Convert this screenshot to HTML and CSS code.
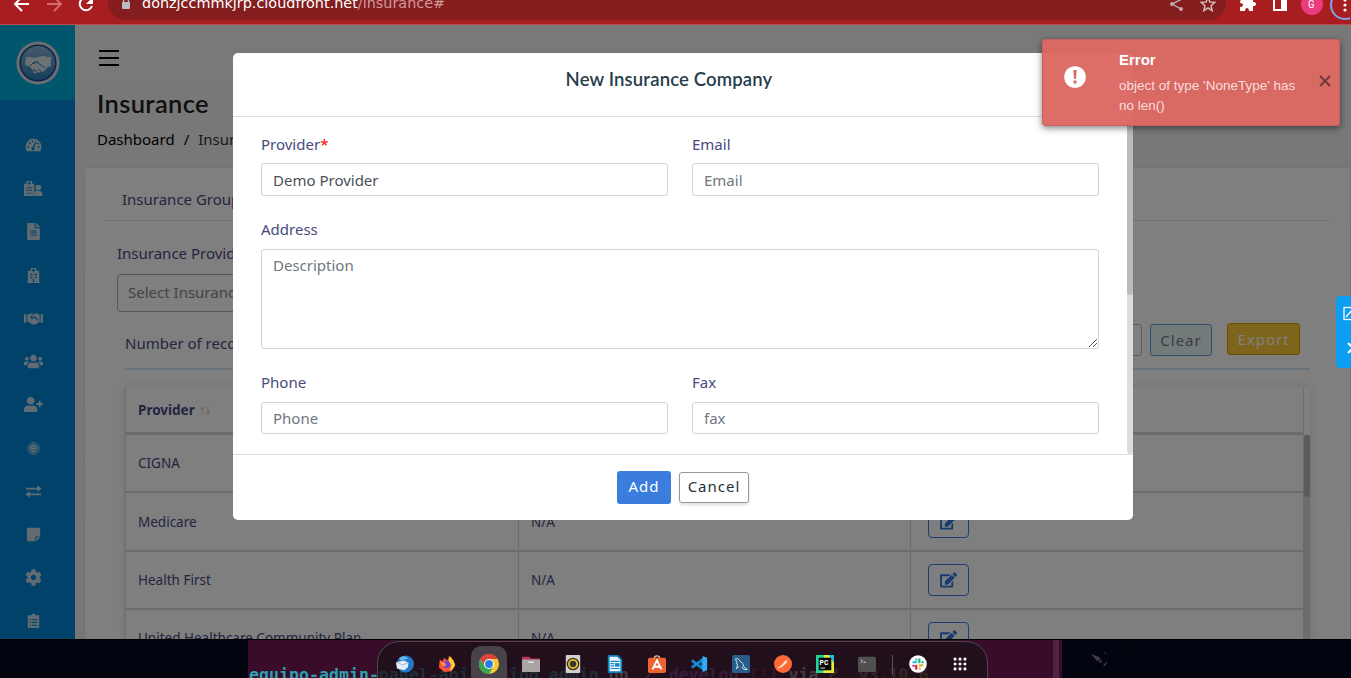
FILE: index.html
```html
<!DOCTYPE html>
<html lang="en">
<head>
<meta charset="utf-8">
<title>Insurance</title>
<link rel="stylesheet" href="styles.css">
</head>
<body>
<svg class="defs" width="0" height="0">
  <symbol id="edit" viewBox="0 0 576 512"><path d="M402.600 83.200l90.200 90.200c3.800 3.800 3.800 10 0 13.800L274.400 405.600l-92.800 10.300c-12.400 1.400-22.900-9.100-21.500-21.500l10.300-92.800L388.800 83.200c3.800-3.800 10-3.800 13.800 0zm162-22.900l-48.800-48.800c-15.200-15.200-39.900-15.200-55.200 0l-35.400 35.400c-3.800 3.800-3.800 10 0 13.800l90.200 90.200c3.800 3.800 10 3.800 13.800 0l35.400-35.400c15.200-15.300 15.200-40 0-55.200zM384 346.200V448H64V128h229.800c3.200 0 6.200-1.300 8.500-3.500l40-40c7.600-7.600 2.200-20.500-8.500-20.500H48C21.500 64 0 85.500 0 112v352c0 26.500 21.500 48 48 48h352c26.500 0 48-21.500 48-48V306.200c0-10.700-12.900-16-20.500-8.500l-40 40c-2.200 2.300-3.500 5.300-3.500 8.500z"/></symbol>
</svg>

<header class="browser">
  <svg class="nav-icons" width="100" height="24" fill="none" stroke="#fff" stroke-width="2"><path d="M29 4H16M22-3l-7 7 7 7"/><path stroke="#d56a6a" d="M47 4h13M54-3l7 7-7 7"/><path d="M91 0a6.300 6.300 0 1 0 1 6"/><path fill="#fff" stroke="none" d="M93-3v7h-7z"/></svg>
  <div class="address">
    <svg width="10" height="12" viewBox="0 0 10 12"><path d="M2.500 5V3a2.500 2.500 0 0 1 5 0v2" fill="none" stroke="#b9bcc0" stroke-width="1.400"/><rect x="1" y="4" width="8" height="7" rx="1" fill="#b9bcc0"/></svg>
    <span class="url">donzjccmmkjrp.cloudfront.net<i>/insurance#</i></span>
    <svg class="share" width="60" height="24" fill="none" stroke="#c3a9a9"><path d="M12-1L2 4l9 5" stroke-width="1.400"/><circle cx="2" cy="4" r="2" fill="#c3a9a9" stroke="none"/><circle cx="11" cy="9" r="2" fill="#c3a9a9" stroke="none"/><path stroke="#d2b8b8" stroke-width="1.500" d="M38-3l1.800 5 5 .3-3.800 3.400 1.200 5L38 8l-4.200 2.700 1.200-5L31.200 2.300l5-.3z"/></svg>
  </div>
  <svg class="actions" width="110" height="24"><path fill="#fff" d="M1-2h4c-1-4 5-4 4 0h4v4c4-1 4 5 0 4v5H9c0-4-4-4-4 0H0V7c4 0 4-4 0-4z"/><rect x="34" y="-4" width="12" height="14" fill="none" stroke="#fff" stroke-width="2"/><path fill="#fff" d="M41-4h6v14h-6z"/><circle cx="72" cy="4" r="11" fill="#eb3b7c"/><text x="68" y="8" font-size="11" fill="#fff">G</text><circle cx="105" cy="5" r="14" fill="none" stroke="#7da5e8" stroke-width="2"/><g fill="#fff"><circle cx="105" cy="0" r="1.600"/><circle cx="105" cy="5" r="1.600"/><circle cx="105" cy="10" r="1.600"/></g></svg>
</header>

<div class="app">
  <aside class="sidebar">
    <div class="brand">
      <svg width="44" height="44" viewBox="0 0 44 44"><defs><linearGradient id="lg" x2="0" y2="1"><stop stop-color="#8cb5d8"/><stop offset="1" stop-color="#287eb8"/></linearGradient></defs><circle cx="22" cy="22" r="21.500" fill="#d9dce2"/><circle cx="22" cy="22" r="17.800" fill="url(#lg)" stroke="#1d4b91" stroke-width="1.600"/><path fill="#d9e2e8" d="M10 16h4l5 1 3-1 5-1 5 1h3v9l-3 1-3 3-2 2-2-1-2 2-3-2-3-1-4-4-4-1zM16 30l5 1-2 2z"/><path d="M14 25l4-4 4 1 7 5M22 20l-5 3M22 28l3 2M18 28l2 2" fill="none" stroke="#397eb0"/></svg>
    </div>
    <nav class="menu">
      <svg viewBox="0 0 20 20"><path d="M10 3a8.500 8.500 0 0 0-7 13h14A8.500 8.500 0 0 0 10 3z"/><g fill="#0084d2"><circle cx="4.500" cy="11.500" r="1"/><circle cx="6" cy="7.500" r="1"/><circle cx="9" cy="5.500" r="1"/><circle cx="15.500" cy="11.500" r="1"/><circle cx="14.500" cy="8" r="1"/><circle cx="9.500" cy="13.500" r="1.700"/></g><path d="M9.500 13l3-7" stroke="#0084d2" stroke-width="1.400"/></svg>
      <svg viewBox="0 0 20 20"><path d="M0 5h2.500V2h6v3H11v6l-1 7H0z"/><circle cx="15" cy="9" r="3"/><path d="M10.500 18c0-6 2-5.500 4.500-5.500s5 0 4.500 5.500z"/><path d="M5.500 3v3M4 4.500h3M3 9h2m1 0h2M3 12h2m1 0h2M3 15h2m1 0h2" stroke="#0084d2" stroke-width="1.300"/></svg>
      <svg viewBox="-96 -24 576 560"><path d="M224 136V0H24C10.700 0 0 10.700 0 24v464c0 13.300 10.700 24 24 24h336c13.300 0 24-10.700 24-24V160H248c-13.200 0-24-10.800-24-24zm64 248H96v-32h192zm0-64H96v-32h192zm0-64H96v-32h192zm96-134v6H256V0h6c6 0 12 3 17 7l98 98c5 5 7 11 7 17z"/></svg>
      <svg viewBox="0 0 20 20"><path d="M4 5h3V2h6v3h3v12h1v1H3v-1h1z"/><path d="M10 3v3M8.500 4.500h3M6.500 9H9m2 0h2.500M6.500 12H9m2 0h2.500M10 14v3" stroke="#0084d2" stroke-width="1.500"/></svg>
      <svg viewBox="0 0 20 20"><path d="M0 5.500h2.500v9H0zM17.500 5.500H20v9h-2.500zM3.500 6l4-1.500 2.500 1 3-1L16.500 6v7.500l-3 2-3 1-3-1-4-2.500z"/><path d="M9 6L7 9l2 1 2-2 4 4" fill="none" stroke="#0084d2" stroke-width="1.100"/></svg>
      <svg viewBox="0 -64 640 640"><path d="M96 224c35.300 0 64-28.700 64-64s-28.700-64-64-64-64 28.700-64 64 28.700 64 64 64zm448 0c35.300 0 64-28.700 64-64s-28.700-64-64-64-64 28.700-64 64 28.700 64 64 64zm32 32h-64c-17.600 0-33.500 7.100-45.100 18.600 40.300 22.100 68.900 62 75.100 109.400h66c17.700 0 32-14.300 32-32v-32c0-35.300-28.700-64-64-64zm-256 0c61.900 0 112-50.100 112-112S381.900 32 320 32 208 82.100 208 144s50.100 112 112 112zm76.800 32h-8.300c-20.800 10-43.900 16-68.500 16s-47.600-6-68.500-16h-8.300C179.600 288 128 339.600 128 403.200V432c0 26.500 21.500 48 48 48h288c26.500 0 48-21.500 48-48v-28.800c0-63.600-51.600-115.200-115.200-115.200zm-223.700-13.400C161.500 263.100 145.600 256 128 256H64c-35.300 0-64 28.700-64 64v32c0 17.700 14.300 32 32 32h65.900c6.300-47.400 34.900-87.300 75.200-109.400z"/></svg>
      <svg viewBox="0 -64 640 640"><path d="M624 208h-64v-64c0-8.800-7.200-16-16-16h-32c-8.800 0-16 7.200-16 16v64h-64c-8.800 0-16 7.200-16 16v32c0 8.800 7.200 16 16 16h64v64c0 8.800 7.200 16 16 16h32c8.800 0 16-7.200 16-16v-64h64c8.800 0 16-7.200 16-16v-32c0-8.800-7.200-16-16-16zm-400 48c70.700 0 128-57.300 128-128S294.700 0 224 0 96 57.300 96 128s57.300 128 128 128zm89.600 32h-16.700c-22.200 10.200-46.900 16-72.900 16s-50.600-5.800-72.900-16h-16.700C60.200 288 0 348.200 0 422.400V464c0 26.500 21.500 48 48 48h352c26.500 0 48-21.500 48-48v-41.600c0-74.200-60.200-134.400-134.400-134.400z"/></svg>
      <svg viewBox="0 0 20 20"><circle cx="10" cy="11" r="6" fill="none" stroke="#c1d9e5" stroke-width="1"/><circle cx="10" cy="11" r="4.400"/><path d="M6 12q4 2 8 0M8 9l3 1 2-1" fill="none" stroke="#0084d2" stroke-width=".8"/></svg>
      <svg viewBox="0 0 20 20"><path d="M2 6h12V3.500L18.500 7 14 10.500V8H2zM18 12H6V9.500L1.500 13 6 16.500V14h12z"/></svg>
      <svg viewBox="0 0 20 20"><path d="M3 4q0-1 1-1h12q1 0 1 1v8h-5v5H4q-1 0-1-1zM13 13h4l-4 4z"/></svg>
      <svg viewBox="-32 -32 576 576"><path d="M487.400 315.700l-42.600-24.600c4.300-23.200 4.300-47 0-70.200l42.600-24.600c4.900-2.800 7.100-8.600 5.500-14-11.100-35.600-30-67.800-54.700-94.600-3.800-4.100-10-5.100-14.800-2.300L380.800 110c-17.900-15.400-38.500-27.300-60.800-35.100V25.800c0-5.600-3.900-10.500-9.400-11.700-36.700-8.200-74.300-7.800-109.200 0-5.500 1.200-9.400 6.100-9.400 11.700V75c-22.200 7.900-42.800 19.800-60.800 35.100L88.700 85.500c-4.900-2.800-11-1.900-14.800 2.300-24.700 26.700-43.600 58.900-54.700 94.600-1.700 5.400.6 11.200 5.500 14L67.300 221c-4.300 23.200-4.300 47 0 70.200l-42.600 24.600c-4.900 2.800-7.100 8.600-5.500 14 11.100 35.600 30 67.800 54.700 94.600 3.800 4.100 10 5.100 14.800 2.300l42.600-24.600c17.900 15.400 38.500 27.300 60.800 35.100v49.200c0 5.600 3.900 10.500 9.400 11.700 36.700 8.200 74.300 7.800 109.200 0 5.500-1.200 9.400-6.100 9.400-11.700v-49.200c22.200-7.900 42.800-19.800 60.800-35.100l42.600 24.600c4.900 2.800 11 1.900 14.800-2.300 24.700-26.700 43.600-58.900 54.700-94.600 1.500-5.500-.7-11.300-5.600-14.100zM256 336c-44.100 0-80-35.900-80-80s35.900-80 80-80 80 35.900 80 80-35.900 80-80 80z"/></svg>
      <svg viewBox="0 0 20 20"><path d="M4 4.500h4a2 2 0 0 1 4 0h4V18H4z"/><path d="M8.500 9H14M8.500 12H14M8.500 15H14M6 9h1.300M6 12h1.300M6 15h1.300" stroke="#0084d2" stroke-width="1.200"/></svg>
    </nav>
  </aside>

  <main class="main">
    <div class="page-head">
      <div class="burger"><b></b><b></b><b></b></div>
      <h1><span>Insurance</span></h1>
      <div class="crumbs"><span class="link">Dashboard</span><span class="slash">/</span><span>Insurance</span></div>
    </div>
    <section class="card">
      <div class="tabs"><span>Insurance Group</span></div>
      <div class="filter">
        <label>Insurance Provider</label>
        <div class="select">Select Insurance</div>
      </div>
      <div class="records">
        <span class="count">Number of records</span>
        <div class="search"></div>
        <div class="clear">Clear</div>
        <div class="export">Export</div>
      </div>
      <div class="table">
        <div class="row head"><div>Provider <small>↑↓</small></div><div></div><div></div></div>
        <div class="scroll-area">
          <div class="rows">
            <div class="row"><div>CIGNA</div><div>N/A</div><div></div></div>
            <div class="row"><div>Medicare</div><div>N/A</div><div><span class="edit"><svg><use href="#edit"/></svg></span></div></div>
            <div class="row"><div>Health First</div><div>N/A</div><div><span class="edit"><svg><use href="#edit"/></svg></span></div></div>
            <div class="row"><div>United Healthcare Community Plan</div><div>N/A</div><div><span class="edit"><svg><use href="#edit"/></svg></span></div></div>
          </div>
          <div class="track"><div class="thumb"></div></div>
        </div>
      </div>
    </section>
  </main>

  <div class="backdrop"></div>
  <div class="widget"><svg width="15" height="72" fill="none" stroke="#fff" stroke-width="1.300"><rect x="8" y="11.500" width="12" height="12"/><path d="M10 21l6-7"/><path stroke-width="2" d="M12 47l5 5-5 5"/></svg></div>

  <div class="modal">
    <div class="modal-head"><h2>New Insurance Company</h2></div>
    <div class="modal-body">
      <div class="form">
        <div class="field"><label>Provider<em>*</em></label><div class="input value">Demo Provider</div></div>
        <div class="field"><label>Email</label><div class="input">Email</div></div>
        <div class="field wide"><label>Address</label><div class="input area">Description<svg width="10" height="10" stroke="#555"><path d="M1 9l8-8M5 9l4-4"/></svg></div></div>
        <div class="field low"><label>Phone</label><div class="input">Phone</div></div>
        <div class="field low"><label>Fax</label><div class="input">fax</div></div>
      </div>
      <div class="modal-track"><div class="modal-thumb"></div></div>
    </div>
    <div class="modal-foot"><div class="btn add">Add</div><div class="btn cancel">Cancel</div></div>
  </div>

  <div class="toast">
    <svg class="warn" width="22" height="22"><circle cx="11" cy="11" r="10.800" fill="#fff"/><path d="M9.300 4h3.400l-.7 9h-2z" fill="#d96c66"/><circle cx="11" cy="16" r="1.700" fill="#d96c66"/></svg>
    <div class="toast-text"><strong>Error</strong><p>object of type 'NoneType' has<br>no len()</p></div>
    <svg class="close" width="12" height="12" stroke="#713a38" stroke-width="2"><path d="M1 1l10 10M11 1L1 11"/></svg>
  </div>
</div>

<div class="desktop">
  <div class="terminal"><pre><b class="cyan">equipo-admin-panel-api/equipo_admin</b> on <b class="violet">⎇ develop</b> <b class="red">[!]</b> via <b class="gold">Ƨ  v3.10.6</b></pre><i class="term-scroll"></i></div>
  <svg class="wallpaper" width="289" height="38"><path fill="#493554" d="M29 14l8 3 2 3-4 1zM36 22l4-2-1 3zM42 13l2-1v2zM41 25l5-4-3 5z"/><path fill="#04060d" d="M50 14l18-10 8-3-14 13z"/></svg>
  <div class="dock">
    <svg viewBox="0 0 20 20"><circle cx="10.500" cy="10" r="9.500" fill="#2477c9"/><path fill="#68b5ee" d="M3 4q5-5 11 0l-8 2z"/><path fill="#e4edf8" d="M0 8l9-2 5 3-1 5-4 3-8-2z"/><path d="M1 8l6 3 6-2" stroke="#98b4d4" fill="none"/></svg>
    <svg viewBox="0 0 20 20"><path fill="#ff513d" d="M2 5l3 2 2-4 3 3 4-5 5 10-4 7-8 1-6-5z"/><path fill="#ffcf38" d="M12 1q6 4 7 10-2 6-6 6l2-6-3-4z"/><circle cx="9.500" cy="10.500" r="4" fill="#7643d5"/><path fill="#ff9a28" d="M2 8l5 0 2 3-3 2z"/></svg>
    <div class="active"><svg viewBox="0 0 20 20"><circle cx="10" cy="10" r="10" fill="#f8ca2f"/><path fill="#dc4439" d="M1.300 5A10 10 0 0 1 18.700 5H10L5.700 12.500z"/><path fill="#35a853" d="M1.300 5L5.700 12.500 14.300 12.500 10 20A10 10 0 0 1 1.300 5z"/><circle cx="10" cy="10" r="5" fill="#fff"/><circle cx="10" cy="10" r="3.900" fill="#297be6"/></svg></div>
    <svg viewBox="0 0 20 20"><path fill="#b8345a" d="M0 2h8l2 2h10v6H0z"/><rect x="0" y="5" width="20" height="14" rx="1" fill="#aaa4a4"/><path stroke="#eee" stroke-width="1.500" d="M7 8h6"/></svg>
    <svg viewBox="0 0 20 20"><rect x="2" y="0" width="16" height="20" rx="1" fill="#d6d1c7"/><circle cx="10" cy="10" r="7" fill="#353535"/><circle cx="10" cy="10" r="4.500" fill="none" stroke="#e7bf20" stroke-width="2"/></svg>
    <svg viewBox="0 0 20 20"><path fill="#eaf5fb" stroke="#087cbd" stroke-width="2" d="M3 1h10l4 4v14H3z"/><path stroke="#138ac5" stroke-width="1.300" d="M5 7h10M5 9.500h4M5 12h4M5 15h10"/><path fill="#138ac5" d="M10 9h5v4h-5z"/></svg>
    <svg viewBox="0 0 20 20"><path d="M7 4q0-3 3-3t3 3" fill="none" stroke="#d9c09c" stroke-width="1.500"/><rect x="0" y="3" width="20" height="17" rx="2" fill="#ef632e"/><path d="M5 16l5-10 5 10M6 13h8" fill="none" stroke="#fff" stroke-width="2.200"/></svg>
    <svg viewBox="0 0 20 20"><path d="M2 6l12 9V5L2 14" fill="none" stroke="#1689d2" stroke-width="3"/><path fill="#36a9f2" d="M14 1l5 2v14l-5 2z"/></svg>
    <svg viewBox="0 0 20 20"><rect width="20" height="20" rx="2" fill="#285d89"/><path d="M4 5q2-3 5 2 4 2 4 6l4 3-4 0-2-3M4 4q1 4 2 7l-1 4 3-2" fill="none" stroke="#d5e4ec" stroke-width="1.100"/></svg>
    <svg viewBox="0 0 20 20"><circle cx="10" cy="10" r="10" fill="#ff6938"/><path d="M6 14l6-7 3-2-1 4-6 5z" fill="#ffe3d7"/><path d="M4 15l4-3" stroke="#fff"/></svg>
    <svg viewBox="0 0 20 20"><path fill="#22d39a" d="M0 0h20v20H0z"/><path fill="#e8ee36" d="M9 0h7l4 8v12H8z"/><path fill="#20bde0" d="M14 0h6v9z"/><path fill="#050505" d="M3 3h14v14H3z"/><text x="4" y="11" font-size="8.500" font-weight="700" fill="#fff">PC</text><path stroke="#fff" d="M5 14.500h5"/></svg>
    <svg viewBox="0 0 20 20"><rect x="0" y="2" width="20" height="17" rx="2" fill="#505050"/><path d="M3 5l2 2-2 2M6 8h3" fill="none" stroke="#ddd"/></svg>
    <i class="divider"></i>
    <svg viewBox="0 0 20 20"><circle cx="10" cy="10" r="9.800" fill="#fff"/><g stroke-width="2.600" stroke-linecap="round"><path stroke="#36c5f0" d="M5 8h3M8 5v0"/><path stroke="#2eb67d" d="M11.500 5v3M15 8v0"/><path stroke="#ecb22e" d="M12 11.500h3M12 15v0"/><path stroke="#e01e5a" d="M8 12v3M5 12v0"/></g></svg>
    <svg viewBox="0 0 20 20"><g fill="#fff"><path d="M3 3h3v3H3zM8.500 3h3v3h-3zM14 3h3v3h-3zM3 8.500h3v3H3zM8.500 8.500h3v3h-3zM14 8.500h3v3h-3zM3 14h3v3H3zM8.500 14h3v3h-3zM14 14h3v3h-3z"/></g></svg>
  </div>
</div>
</body>
</html>
```

FILE: styles.css
```css
* { box-sizing: border-box; }
body { margin: 0; width: 1351px; height: 678px; overflow: hidden; font-family: "Noto Sans", sans-serif; font-stretch: 87.5%; font-size: 15px; letter-spacing: 0; color: #474a80; background: #020510; }
h1, h2, p, pre { margin: 0; }
.defs { position: absolute; }
svg { flex: none; display: block; }

.browser { height: 25px; background: #a81d1f; border-bottom: 1px solid #bd4a4b; display: flex; font-family: Roboto, sans-serif; overflow: hidden; }
.nav-icons { width: 100px; margin-right: 8px; }
.address { width: 1118px; height: 20px; background: #841d1e; border-radius: 0 0 18px 18px; display: flex; padding-left: 13px; }
.address > svg:first-child { margin-top: -2px; }
.url { font: 14.400px/20px "DejaVu Sans", sans-serif; letter-spacing: 0; color: #fff; margin: -7px 0 0 11px; }
.url i { font-style: normal; color: #cf9b9c; }
.share { margin-left: auto; margin-right: -4px; }
.actions { margin-left: 14px; }

.app { position: relative; height: 614px; display: flex; overflow: hidden; }
.sidebar { width: 75px; flex: none; background: #0084d2; }
.brand { height: 75px; background: #00add9; display: flex; align-items: center; justify-content: center; }
.menu { display: grid; grid-auto-rows: 43.200px; padding-top: 24px; padding-left: 24px; align-items: center; }
.menu svg { width: 19px; height: 19px; fill: #c1d9e5; }

.main { flex: 1; min-width: 0; background: linear-gradient(#f2f2f2, #ededed); padding: 24px 1px 0 10px; }
.page-head { padding-left: 13px; height: 119px; }
.burger { display: grid; gap: 5px; width: 20px; padding-top: 1px; margin-left: 1px; }
.burger b { height: 2px; background: #000; }
h1 { font: 600 25.500px/30px Lato, sans-serif; letter-spacing: .35px; color: #202020; margin-top: 22px; margin-left: -1px; }
.crumbs { color: #333; margin-top: 11px; line-height: 20px; display: flex; gap: 9px; margin-left: -1px; }
.crumbs .link, .crumbs .slash { color: #000; }
.card { background: #fff; height: 600px; border-radius: 4px 4px 0 0; padding: 0 20px; box-shadow: 0 0 3px #d8d8d8; }
.tabs { height: 53px; border-bottom: 1px solid #dedede; padding: 21px 17px 0; line-height: 20px; }
.filter { padding: 22px 12px 0; }
.filter label { display: block; line-height: 20px; }
.select { height: 38px; width: 300px; border: 1px solid #aaa; border-radius: 4px; color: #888; padding: 7px 10px; line-height: 20px; margin-top: 11px; }
.records { margin: 10px 20px 0; height: 48px; border-bottom: 2px solid #d6e7f5; display: flex; align-items: flex-start; }
.count { line-height: 20px; margin-top: 11px; }
.search { width: 100px; height: 32px; border: 1px solid #bbb; border-radius: 3px; margin: 2px 8px 0 auto; }
.clear, .export { height: 32px; border-radius: 3px; letter-spacing: 1px; text-align: center; line-height: 30px; border: 1px solid; }
.clear { width: 62px; background: #e7f6f4; border-color: #5d97df; margin-top: 2px; color: #757985; }
.export { width: 73px; color: #fff; background: #ffcb36; border-color: #d79f00; margin: 1px 10px 0 15px; }
.table { margin: 17px 20px 0; box-shadow: 0 0 8px #ddd; font-size: 13.500px; }
.row { display: grid; grid-template-columns: 393px 392px 393px; height: 58.400px; border-bottom: 2px solid #d9d9d9; border-left: 1px solid #d9d9d9; }
.row > div { border-right: 1px solid #d9d9d9; padding: 0 12px; display: flex; align-items: center; }
.row > div:nth-child(3) { padding-left: 17px; }
.head { height: 48px; width: 1179px; border-bottom-width: 3px; font-weight: 700; }
.head small { font-weight: 400; color: #aaa; margin-left: 4px; font-size: 12px; }
.scroll-area { display: flex; }
.track { width: 6px; background: #d9d9d9; }
.thumb { height: 62px; background: #b6b6b6; border-radius: 3px; }
.edit { width: 41px; height: 32px; border: 1px solid #3a7edf; border-radius: 4px; display: grid; place-items: center; }
.edit svg { width: 17px; height: 16px; fill: #2e77dc; }

.backdrop { position: absolute; inset: 0; background: rgba(0,0,0,.5); }
.widget { position: absolute; right: 0; top: 271px; width: 15px; height: 72px; background: #0c9ef0; border-radius: 4px 0 0 4px; }

.modal { position: absolute; left: 233px; top: 28px; width: 900px; height: 467px; background: #fff; border-radius: 5px; display: flex; flex-direction: column; overflow: hidden; }
.modal-head { height: 64px; border-bottom: 1px solid #dcdee5; padding: 14px 0 0 0; text-align: center; }
h2 { font: 600 18.500px/25px Lato, sans-serif; letter-spacing: .15px; color: #263e4b; padding-right: 28px; }
.modal-body { height: 337px; display: flex; }
.form { width: 894px; padding: 17px 28px 0; display: grid; grid-template-columns: 407px 407px; column-gap: 24px; align-content: start; }
.field { height: 85px; }
.field.wide { grid-column: span 2; height: 153px; }
.field label { display: block; line-height: 20px; }
.field em { color: red; font-style: normal; }
.input { border: 1px solid #ced1da; border-radius: 3px; height: 33px; margin-top: 9px; padding: 0 11px; line-height: 32px; color: #707780; }
.wide .input { margin-top: 10px; }
.low .input { height: 32px; margin-top: 10px; line-height: 30px; }
.value { color: #4b5057; }
.input.area { height: 100px; display: flex; justify-content: space-between; padding: 0 0 0 11px; line-height: 30px; }
.area svg { align-self: flex-end; }
.modal-track { width: 6px; background: #dcdcdc; border-radius: 0 0 3px 3px; }
.modal-thumb { height: 178px; background: #bbb; border-radius: 0 0 3px 3px; }
.modal-foot { flex: 1; border-top: 1px solid #dcdee5; display: flex; justify-content: center; align-items: center; gap: 8px; }
.btn { border-radius: 3px; letter-spacing: 1px; text-align: center; }
.add { width: 54px; height: 33px; line-height: 31px; color: #fff; background: #3b7ddd; }
.cancel { width: 70px; height: 31px; border: 1px solid #9298a0; line-height: 27px; color: #26323a; box-shadow: 0 2px 3px #ddd; }

.toast { position: absolute; left: 1042px; top: 14px; width: 298px; height: 87px; border-radius: 3px; background: rgba(219,104,98,.97); border: 1px solid #c9605c; box-shadow: 0 2px 7px rgba(0,0,0,.5); display: flex; font: 13.500px/20px "Liberation Sans", sans-serif; letter-spacing: 0; color: #f8dddd; }
.warn { margin: 26px 0 0 21px; }
.toast-text { margin: 10px 0 0 33px; width: 186px; }
.toast strong { font-size: 15px; color: #fff; display: block; }
.toast p { margin-top: 6px; }
.close { margin: 35px 0 0 14px; }

.desktop { position: relative; height: 39px; border-top: 1px solid #000; background: #020510; display: flex; padding-left: 248px; overflow: hidden; }
.terminal { width: 814px; background: #390c29; display: flex; justify-content: space-between; padding-right: 3px; overflow: hidden; }
.terminal pre { font: 700 16.600px/24px "DejaVu Sans Mono", monospace; letter-spacing: 0; margin: 23px 0 -20px 1px; color: #ddd; width: 800px; flex: none; }
.cyan { color: #2aa1b3; }
.violet { color: #a347ba; }
.red { color: #c01c28; }
.gold { color: #a2734c; }
.term-scroll { width: 6px; background: #4c2540; }
.dock { position: absolute; left: 377px; top: 1px; width: 611px; height: 60px; border: 1px solid #4c494c; border-radius: 22px; background: rgba(27,18,24,.8); display: flex; align-items: flex-start; padding: 13px 6px 0; }
.dock > svg { width: 18px; height: 18px; margin: 0 12px; }
.active { width: 36px; height: 40px; border-radius: 10px; background: #48424a; margin: -9px 3px 0; padding: 8px; }
.active svg { width: 20px; height: 20px; }
.dock text { font-family: Roboto, sans-serif; letter-spacing: 0; }
.divider { width: 1px; height: 20px; background: #555; margin: 0 4px 0 4px; }
```
